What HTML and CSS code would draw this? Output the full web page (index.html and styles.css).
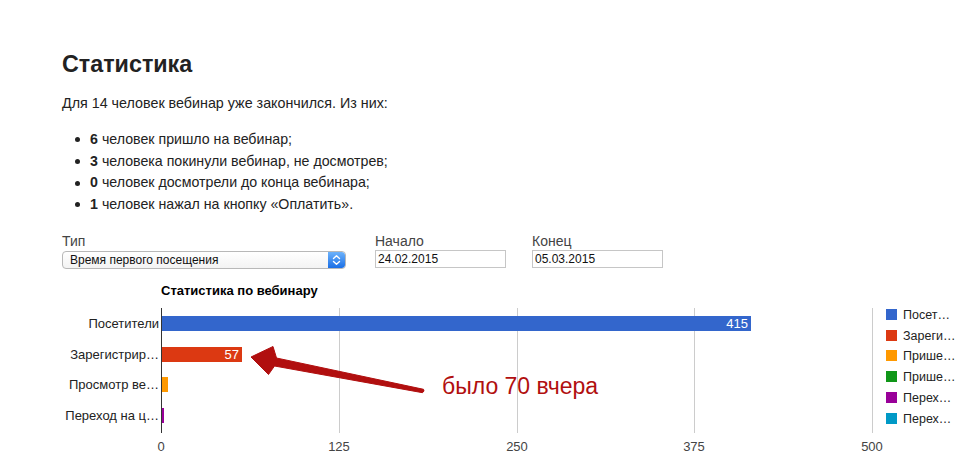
FILE: index.html
```html
<!DOCTYPE html>
<html lang="ru">
<head>
<meta charset="utf-8">
<title>Статистика</title>
<link rel="stylesheet" href="styles.css">
</head>
<body>
<div class="page">
  <h1 class="title">Статистика</h1>
  <p class="intro">Для 14 человек вебинар уже закончился. Из них:</p>
  <ul class="facts">
    <li><b>6</b> человек пришло на вебинар;</li>
    <li><b>3</b> человека покинули вебинар, не досмотрев;</li>
    <li><b>0</b> человек досмотрели до конца вебинара;</li>
    <li><b>1</b> человек нажал на кнопку «Оплатить».</li>
  </ul>
  <div class="filters">
    <div class="field field-type">
      <div class="label">Тип</div>
      <div class="select">
        <span class="select-text">Время первого посещения</span>
        <span class="stepper">
          <svg width="17" height="16" viewBox="0 0 17 16"><path d="M5.5 6.5 L8.5 3.8 L11.5 6.5 M5.5 9.5 L8.5 12.2 L11.5 9.5" fill="none" stroke="#fff" stroke-width="1.4" stroke-linecap="round" stroke-linejoin="round"/></svg>
        </span>
      </div>
    </div>
    <div class="field field-date">
      <div class="label">Начало</div>
      <div class="input">24.02.2015</div>
    </div>
    <div class="field field-date">
      <div class="label">Конец</div>
      <div class="input">05.03.2015</div>
    </div>
  </div>
</div>
<div class="chart">
  <svg class="chart-svg" width="963" height="187" viewBox="0 0 963 187">
    <text x="161" y="16" class="ch-title">Статистика по вебинару</text>
    <g stroke="#cccccc" stroke-width="1">
      <line x1="339.5" y1="29" x2="339.5" y2="154"/>
      <line x1="517.5" y1="29" x2="517.5" y2="154"/>
      <line x1="694.5" y1="29" x2="694.5" y2="154"/>
      <line x1="872.5" y1="29" x2="872.5" y2="154"/>
    </g>
    <rect x="162" y="37" width="589" height="15" fill="#3366cc"/>
    <rect x="162" y="68" width="80" height="15" fill="#dc3912"/>
    <rect x="162" y="98" width="6" height="15" fill="#ff9900"/>
    <rect x="162" y="129" width="2" height="15" fill="#990099"/>
    <line x1="161.5" y1="29" x2="161.5" y2="154" stroke="#333" stroke-width="1"/>
    <g class="ch-cat">
      <text x="159" y="49">Посетители</text>
      <text x="159" y="80">Зарегистрир…</text>
      <text x="159" y="110">Просмотр ве…</text>
      <text x="159" y="141">Переход на ц…</text>
    </g>
    <g class="ch-val">
      <text x="748" y="49">415</text>
      <text x="239" y="80">57</text>
    </g>
    <g class="ch-axis">
      <text x="161" y="172">0</text>
      <text x="339" y="172">125</text>
      <text x="517" y="172">250</text>
      <text x="694" y="172">375</text>
      <text x="872" y="172">500</text>
    </g>
    <g class="ch-legend">
      <rect x="886" y="30" width="11" height="11" fill="#3366cc"/>
      <text x="903" y="40">Посет…</text>
      <rect x="886" y="51" width="11" height="11" fill="#dc3912"/>
      <text x="903" y="61">Зареги…</text>
      <rect x="886" y="71" width="11" height="11" fill="#ff9900"/>
      <text x="903" y="81">Прише…</text>
      <rect x="886" y="92" width="11" height="11" fill="#109618"/>
      <text x="903" y="102">Прише…</text>
      <rect x="886" y="113" width="11" height="11" fill="#990099"/>
      <text x="903" y="123">Перех…</text>
      <rect x="886" y="134" width="11" height="11" fill="#0099c6"/>
      <text x="903" y="144">Перех…</text>
    </g>
  </svg>
  <div class="annotation">
    <svg class="arrow" width="963" height="187" viewBox="0 0 963 187">
      <path d="M251 78 L273 67.5 L276.5 79 L423.5 110.3 Q425 112 422.5 113.7 L274.5 87 L268.5 95.5 Z" fill="#b10f0f" stroke="#b10f0f" stroke-width="1" stroke-linejoin="round"/>
    </svg>
    <span class="note">было 70 вчера</span>
  </div>
</div>
</body>
</html>
```

FILE: styles.css
```css
html, body {
  margin: 0;
  padding: 0;
  background: #ffffff;
}
body {
  font-family: "Liberation Sans", Arial, sans-serif;
  color: #222222;
}
.page {
  padding: 52px 0 0 62px;
}
.title {
  margin: 0;
  font-size: 23.3px;
  line-height: 25px;
  font-weight: bold;
  color: #222222;
}
.intro {
  margin: 18px 0 0 0;
  font-size: 14.3px;
  line-height: 16px;
  color: #222222;
}
.facts {
  list-style: none;
  margin: 18px 0 0 0;
  padding: 0 0 0 13px;
  font-size: 14.2px;
  line-height: 21.7px;
}
.facts li {
  display: flex;
  align-items: center;
}
.facts li::before {
  content: "";
  width: 5px;
  height: 5px;
  border-radius: 50%;
  background: #222;
  margin-right: 10px;
  flex: none;
}
.facts b {
  margin-right: 4px;
}
.filters {
  display: flex;
  margin-top: 17px;
}
.field {
  display: flex;
  flex-direction: column;
}
.field-type {
  width: 284px;
  margin-right: 29px;
}
.field-date {
  width: 131px;
  margin-right: 26px;
}
.label {
  font-size: 14px;
  line-height: 16px;
  color: #444444;
  margin-bottom: 1px;
}
.select {
  box-sizing: border-box;
  height: 18px;
  margin-top: 1px;
  border: 1px solid #b8b8b8;
  border-radius: 4px;
  background: linear-gradient(#ffffff, #f3f3f3);
  display: flex;
  align-items: center;
  justify-content: space-between;
  font-size: 12px;
  color: #111111;
  overflow: hidden;
}
.select-text {
  padding-left: 7px;
}
.stepper {
  width: 17px;
  height: 16px;
  background: linear-gradient(#6cb2fb, #1b6fe6);
  border-radius: 0 3px 3px 0;
  display: flex;
  align-items: center;
  justify-content: center;
}
.stepper svg {
  display: block;
}
.input {
  box-sizing: border-box;
  height: 18px;
  border: 1px solid #c6c6c6;
  font-size: 12px;
  line-height: 16px;
  padding-left: 2px;
  color: #111111;
}
.chart {
  position: relative;
  margin-top: 10px;
  width: 963px;
  height: 187px;
}
.chart-svg {
  display: block;
  font-family: "Liberation Sans", Arial, sans-serif;
}
.ch-title {
  font-size: 13px;
  font-weight: bold;
  fill: #000000;
}
.ch-cat text {
  font-size: 13px;
  fill: #222222;
  text-anchor: end;
}
.ch-val text {
  font-size: 13px;
  fill: #ffffff;
  text-anchor: end;
}
.ch-axis text {
  font-size: 13px;
  fill: #444444;
  text-anchor: middle;
}
.ch-legend text {
  font-size: 12.5px;
  fill: #222222;
}
.annotation {
  position: absolute;
  left: 0;
  top: 0;
  width: 963px;
  height: 187px;
  pointer-events: none;
}
.arrow {
  position: absolute;
  left: 0;
  top: 0;
}
.note {
  position: absolute;
  left: 442px;
  top: 95px;
  font-size: 23px;
  line-height: 25px;
  color: #b10f0f;
  white-space: nowrap;
}
```
